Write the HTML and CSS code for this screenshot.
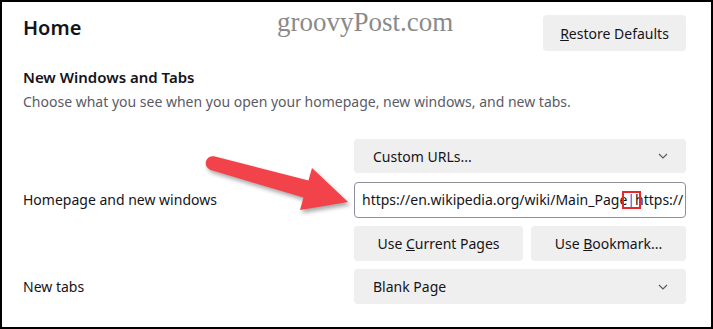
FILE: index.html
```html
<!DOCTYPE html>
<html lang="en">
<head>
<meta charset="utf-8">
<link rel="stylesheet" href="styles.css">
</head>
<body>
<div class="frame">
  <div class="watermark">groovyPost.com</div>
  <header class="header">
    <h1 class="title">Home</h1>
    <button class="btn restore"><u>R</u>estore Defaults</button>
  </header>
  <h2 class="section-title">New Windows and Tabs</h2>
  <p class="desc">Choose what you see when you open your homepage, new windows, and new tabs.</p>
  <div class="grid">
    <div class="select row-a">
      <span>Custom URLs...</span>
      <svg class="chev" width="10" height="6" viewBox="0 0 10 6"><path d="M1 1 L5 5 L9 1" fill="none" stroke="#5b5b66" stroke-width="1.2"/></svg>
    </div>
    <label class="label">Homepage and new windows</label>
    <div class="input">https://en.wikipedia.org/wiki/Main_Page<span class="pipe">|</span>https://</div>
    <div class="btn-row">
      <button class="btn"><span>Use <u>C</u>urrent Pages</span></button>
      <button class="btn"><span>Use <u>B</u>ookmark...</span></button>
    </div>
    <label class="label">New tabs</label>
    <div class="select">
      <span>Blank Page</span>
      <svg class="chev" width="10" height="6" viewBox="0 0 10 6"><path d="M1 1 L5 5 L9 1" fill="none" stroke="#5b5b66" stroke-width="1.2"/></svg>
    </div>
  </div>
  <svg class="arrow" width="713" height="329" viewBox="0 0 713 329">
    <path d="M213.9 156.3 L308.5 180.4 L312 168 L348 202 L300 210 L303.5 197.6 L210.1 169.7 A7 7 0 0 1 213.9 156.3 Z" fill="#f2424a"/>
  </svg>
</div>
</body>
</html>
```
FILE: styles.css
```css
* { box-sizing: border-box; }
html, body { margin: 0; padding: 0; background: #fff; }
body { font-family: "Noto Sans", "Open Sans", sans-serif; color: #15141a; }
.frame {
  position: relative;
  width: 713px;
  height: 329px;
  border: 2px solid #000;
  padding: 13px 25px 0 21px;
  overflow: hidden;
}
.watermark {
  position: absolute;
  left: 275px;
  top: 5px;
  font-family: "Liberation Serif", serif;
  font-size: 27px;
  color: #8a8a8a;
}
.header {
  display: flex;
  justify-content: space-between;
  align-items: flex-start;
  height: 36px;
}
.title {
  margin: -1px 0 0;
  font-size: 20px;
  line-height: 28px;
  font-weight: 600;
}
.btn {
  font-family: inherit;
  font-size: 14px;
  color: #15141a;
  background: #efefef;
  border: none;
  border-radius: 4px;
  height: 35px;
  padding: 0 16px;
}
.restore { height: 36px; width: 143px; padding: 0; }
.section-title {
  margin: 15px 0 0;
  font-size: 15px;
  line-height: 22px;
  font-weight: 600;
}
.desc {
  margin: 4px 0 0;
  font-size: 14px;
  line-height: 20px;
  color: #5b5b66;
}
.grid {
  margin-top: 27px;
  display: grid;
  grid-template-columns: 331px 332px;
  row-gap: 8px;
}
.label {
  grid-column: 1;
  align-self: center;
  font-size: 14px;
}
.select, .input, .btn-row { grid-column: 2; }
.select {
  height: 35px;
  background: #efefef;
  border-radius: 4px;
  display: flex;
  align-items: center;
  justify-content: space-between;
  padding: 0 18px 0 19px;
  font-size: 14px;
}
.row-a { height: 34px; }
.input {
  height: 36px;
  margin-top: 1px;
  border: 1px solid #8f8f9d;
  border-radius: 4px;
  padding: 0 8px 0 7px;
  font-size: 14px;
  line-height: 34px;
  white-space: nowrap;
  overflow: hidden;
}
.pipe { color: #0060df; position: relative; }
.pipe::after {
  content: "";
  position: absolute;
  left: -5px;
  right: -6px;
  top: 1px;
  bottom: 0;
  border: 2px solid #e8262d;
}
.btn-row {
  display: grid;
  grid-template-columns: 169px 155px;
  column-gap: 8px;
}
.btn-row .btn { width: 100%; padding: 0; }
.arrow {
  position: absolute;
  left: -2px;
  top: -2px;
  filter: drop-shadow(2px 3px 2px rgba(0,0,0,0.35));
  pointer-events: none;
}
```
